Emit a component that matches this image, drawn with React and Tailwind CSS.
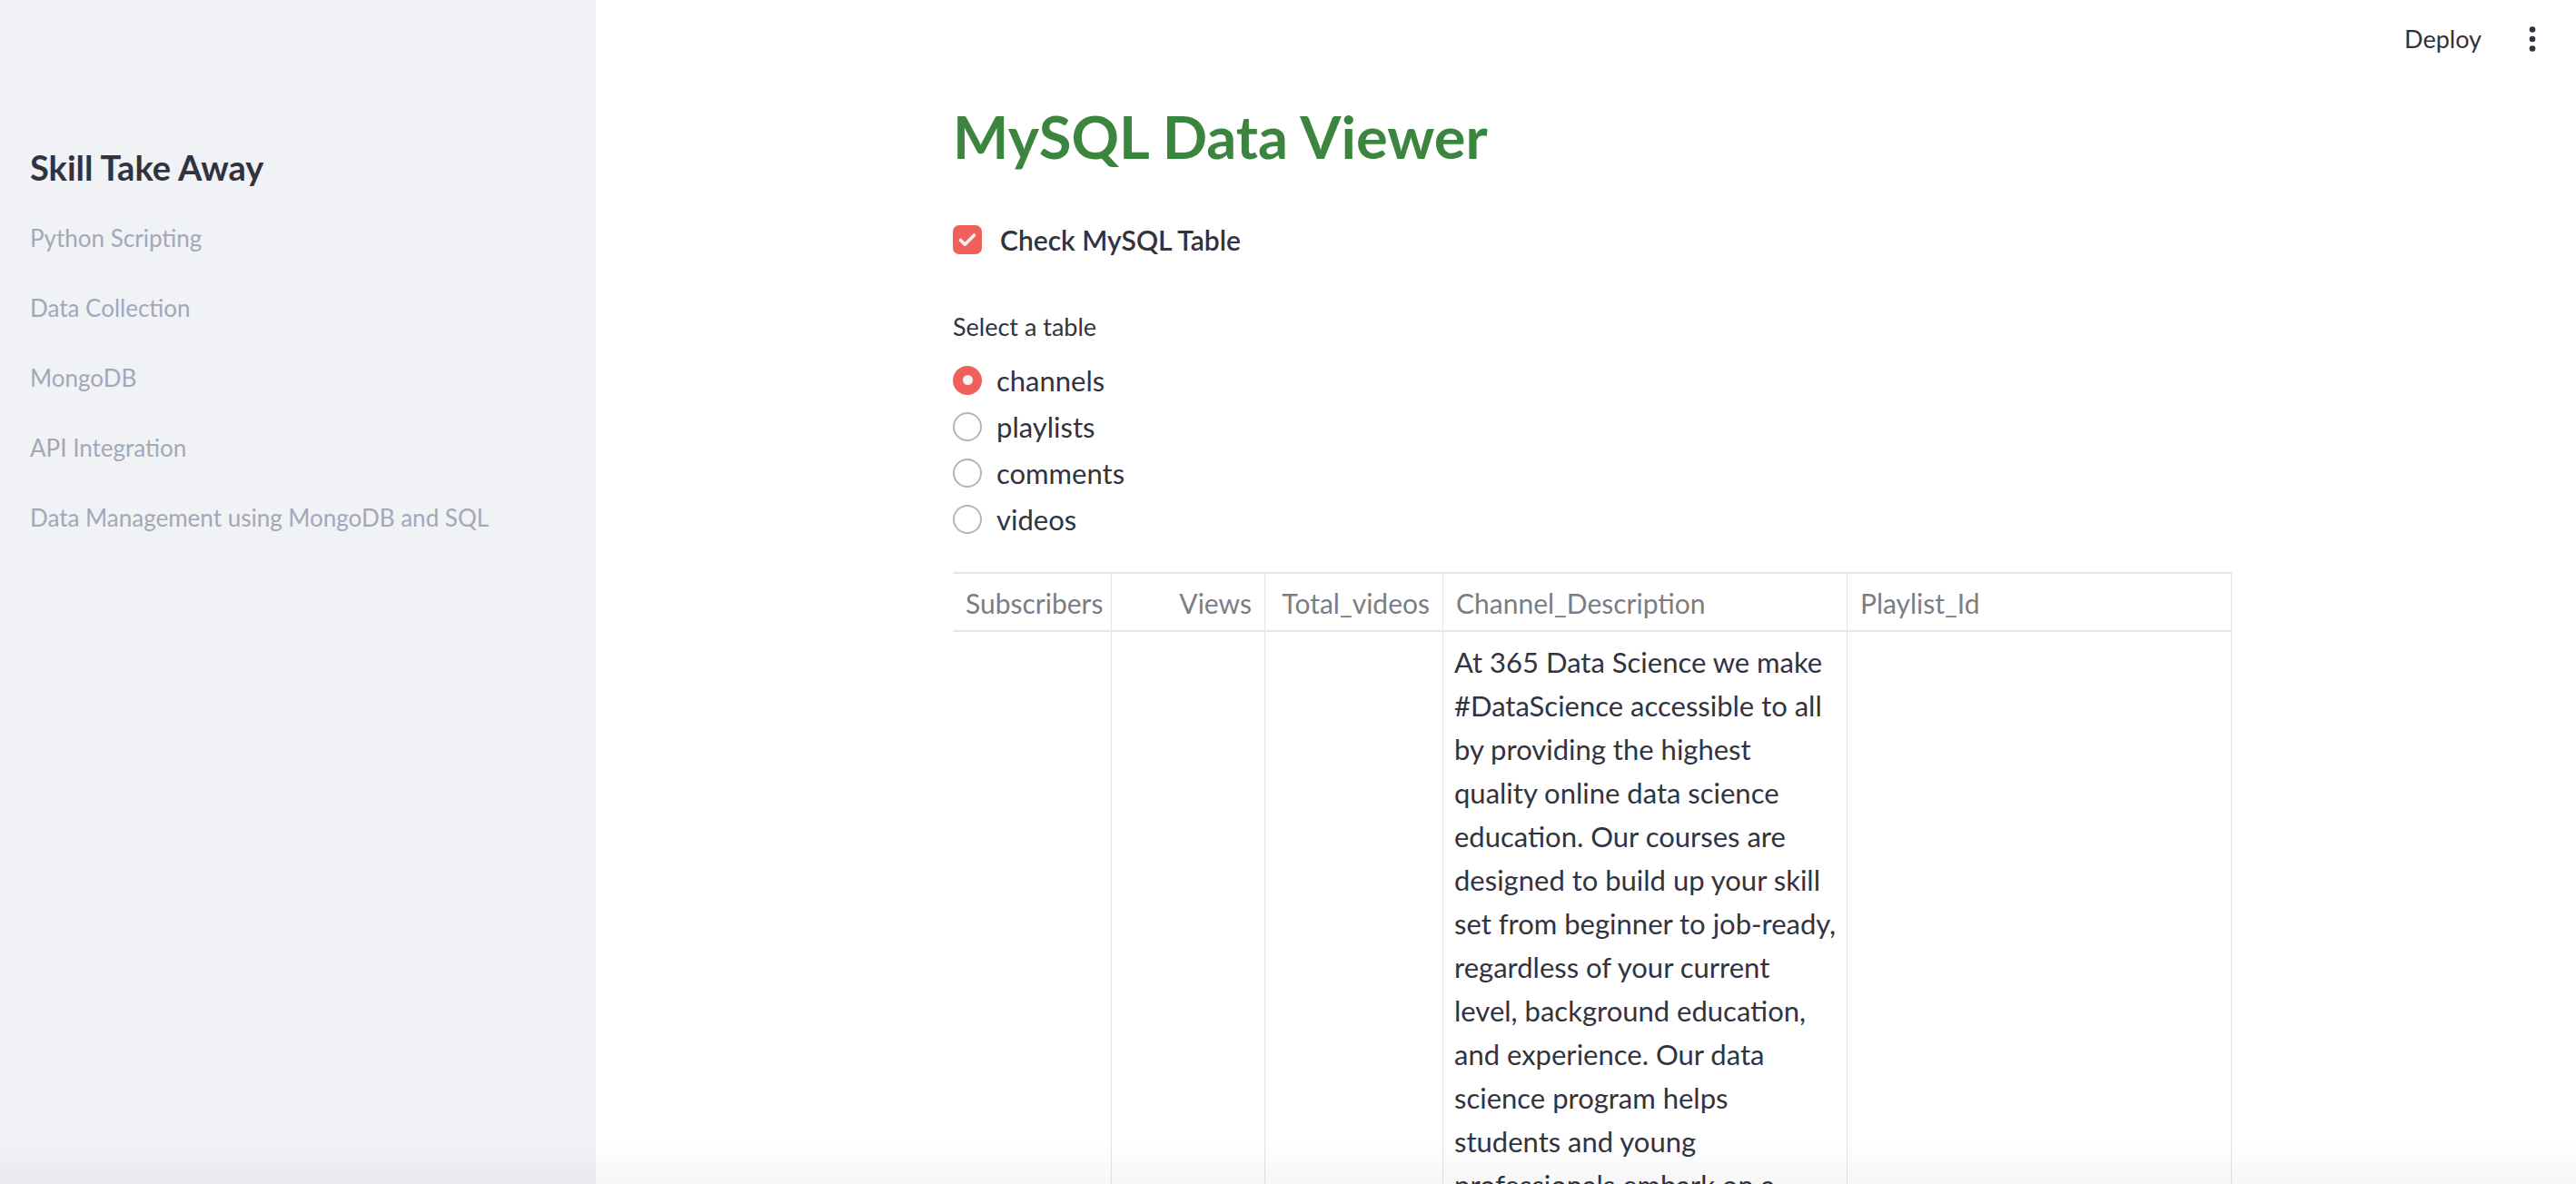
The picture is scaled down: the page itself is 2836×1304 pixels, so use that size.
import React from "react";

const navItems = [
  "Python Scripting",
  "Data Collection",
  "MongoDB",
  "API Integration",
  "Data Management using MongoDB and SQL",
];

const tables = ["channels", "playlists", "comments", "videos"];

const descriptionLines = [
  "At 365 Data Science we make",
  "#DataScience accessible to all",
  "by providing the highest",
  "quality online data science",
  "education. Our courses are",
  "designed to build up your skill",
  "set from beginner to job-ready,",
  "regardless of your current",
  "level, background education,",
  "and experience. Our data",
  "science program helps",
  "students and young",
  "professionals embark on a",
  "successful career in data",
  "science.",
];

const columns = [
  { name: "Subscribers", width: "w-[175px]", align: "text-right" },
  { name: "Views", width: "w-[169px]", align: "text-right" },
  { name: "Total_videos", width: "w-[196px]", align: "text-right" },
  { name: "Channel_Description", width: "w-[445px]", align: "text-left" },
  { name: "Playlist_Id", width: "w-[423px]", align: "text-left" },
];

const Radio = ({ label, checked }) => (
  <div className="flex h-[51px] items-center">
    {checked ? (
      <span className="flex h-[32px] w-[32px] items-center justify-center rounded-full bg-[#f0605a]">
        <span className="h-[11px] w-[11px] rounded-full bg-[#f0f2f6]"></span>
      </span>
    ) : (
      <span className="h-[32px] w-[32px] rounded-full border-2 border-[#b4b5b9] bg-white"></span>
    )}
    <span className="ml-[16px] text-[31px] leading-[40px] text-[#31333f]">{label}</span>
  </div>
);

const App = () => {
  return (
    <div className="relative flex h-[1304px] w-full overflow-hidden bg-white font-['Lato',sans-serif] text-[#31333f]">
      {/* sidebar */}
      <aside className="w-[656px] shrink-0 bg-[#f0f2f6] px-[33px] pt-[158px]">
        <h2 className="text-[38px] font-bold leading-[52px] text-[#31333f]">Skill Take Away</h2>
        <nav className="mt-[14px] flex flex-col">
          {navItems.map((item) => (
            <div key={item} className="flex h-[77px] items-center text-[26px] text-[#a3a8b8]">
              {item}
            </div>
          ))}
        </nav>
      </aside>

      {/* main */}
      <main className="relative flex-1">
        <div className="flex h-[86px] items-center justify-end pr-[44px]">
          <span className="text-[27px] text-[#31333f]">Deploy</span>
          <svg className="ml-[52px]" width="8" height="30" viewBox="0 0 8 30">
            <circle cx="4" cy="4.5" r="3.3" fill="#31333f" />
            <circle cx="4" cy="15" r="3.3" fill="#31333f" />
            <circle cx="4" cy="25.5" r="3.3" fill="#31333f" />
          </svg>
        </div>

        <div className="ml-[393px] w-[1408px]">
          <h1 className="mt-[18px] h-[92px] text-[65px] font-bold leading-[92px] text-[#3c853e]">MySQL Data Viewer</h1>

          <label className="mt-[44px] flex h-[48px] items-center">
            <span className="flex h-[32px] w-[32px] items-center justify-center rounded-[7px] bg-[#f0605a]">
              <svg width="24" height="24" viewBox="0 0 24 24" fill="none">
                <path d="M4.5 12.5l4.8 4.8L19.5 7" stroke="#f0f2f6" strokeWidth="3.6" strokeLinecap="round" strokeLinejoin="round" />
              </svg>
            </span>
            <span className="ml-[20px] text-[30px] font-semibold text-[#31333f]">Check MySQL Table</span>
          </label>

          <div className="mt-[52px] h-[40px] text-[27px] leading-[40px] text-[#31333f]">Select a table</div>

          <div className="mt-[13px] flex flex-col">
            {tables.map((t, i) => (
              <Radio key={t} label={t} checked={i === 0} />
            ))}
          </div>

          {/* dataframe */}
          <div className="mt-[33px] border-t-2 border-r border-[#e6e6e8]">
            <div className="flex h-[64px] border-b-2 border-[#e6e6e8]">
              {columns.map((c, i) => (
                <div
                  key={c.name}
                  className={`${c.width} ${c.align} ${i < columns.length - 1 ? "border-r border-[#e6e6e8]" : ""} flex-none px-[14px] text-[30px] leading-[64px] text-[#7b7d86]`}
                >
                  {c.name}
                </div>
              ))}
            </div>
            <div className="flex">
              <div className="w-[175px] flex-none border-r border-[#e6e6e8]"></div>
              <div className="w-[169px] flex-none border-r border-[#e6e6e8]"></div>
              <div className="w-[196px] flex-none border-r border-[#e6e6e8]"></div>
              <div className="w-[445px] flex-none border-r border-[#e6e6e8] px-[12px] pt-[9px] text-[31px] leading-[48px] text-[#31333f]">
                {descriptionLines.map((line) => (
                  <div key={line} className="whitespace-nowrap">{line}</div>
                ))}
              </div>
              <div className="w-[423px] flex-none"></div>
            </div>
          </div>
        </div>
      </main>

      {/* bottom fade */}
      <div className="pointer-events-none absolute inset-x-0 bottom-0 h-[50px] bg-gradient-to-b from-transparent to-[#000000]/[0.035]"></div>
    </div>
  );
};

export default App;
